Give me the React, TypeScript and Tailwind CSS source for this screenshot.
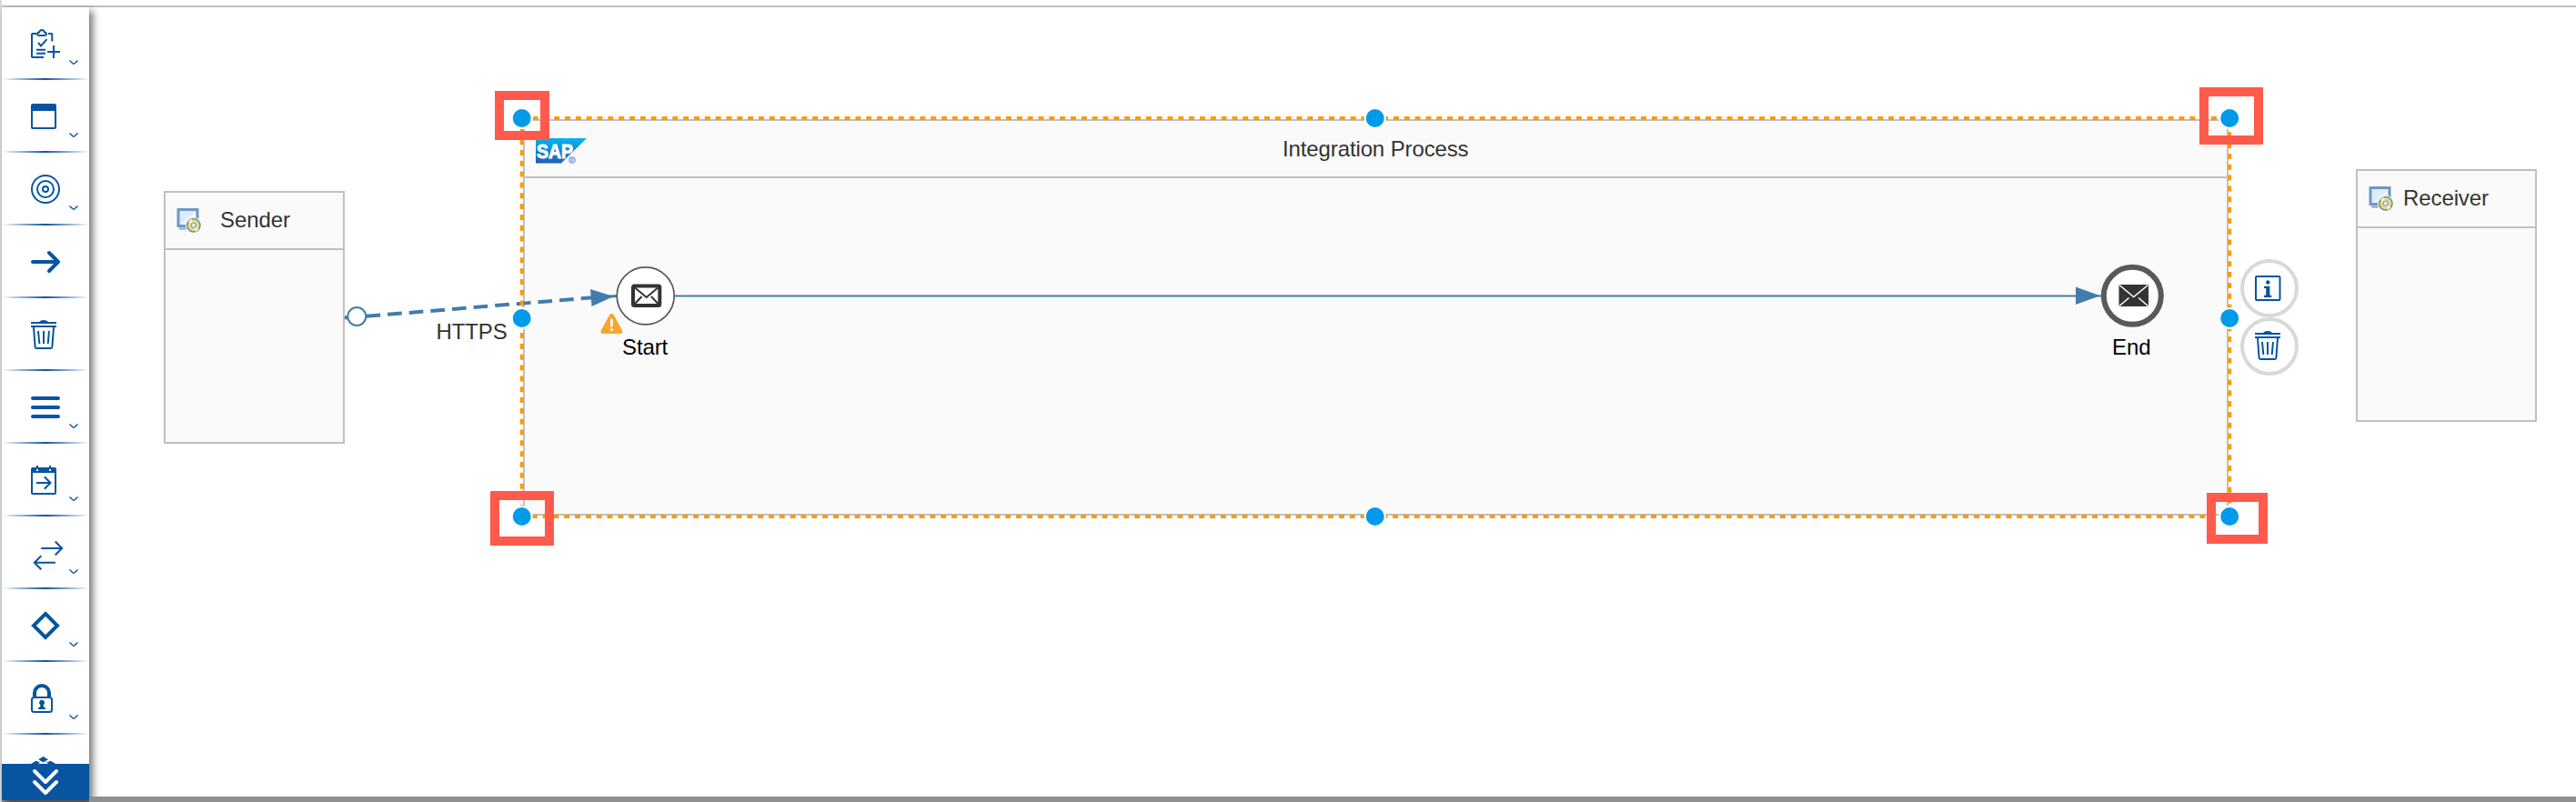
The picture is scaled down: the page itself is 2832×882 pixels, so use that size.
import type { ReactNode } from "react";

const BLUE = "#0854a0";
const WIRE = "#427cac";

function Glyph({ children, className = "" }: { children: ReactNode; className?: string }) {
  return (
    <svg
      width="32"
      height="32"
      viewBox="0 0 32 32"
      fill="none"
      stroke={BLUE}
      strokeWidth="2"
      className={`overflow-visible shrink-0 ${className}`}
    >
      {children}
    </svg>
  );
}

const TrashGlyph = () => (
  <Glyph>
    <path d="M9 2.2C10 .8 11.500 0 14 0s4 .8 5 2.200z" fill={BLUE} stroke="none" />
    <path d="M0 3h28M0 7h28" />
    <path d="M3 8l1.600 21.500q.1 1.500 1.500 1.500h15.800q1.400 0 1.500-1.500L25 8" />
    <path d="M8 12l1.300 14M14 12v14M20 12l-1.300 14" />
  </Glyph>
);

const InfoGlyph = () => (
  <Glyph>
    <rect x="1" y="4" width="26.500" height="26" rx="1" />
    <circle cx="14.300" cy="10.500" r="2.200" fill={BLUE} stroke="none" />
    <path d="M10 14.700h6.400v10h1.900v2.200H10v-2.200h2.200v-7.600H10z" fill={BLUE} stroke="none" />
  </Glyph>
);

const tools: { name: string; more: boolean; icon: ReactNode }[] = [
  {
    name: "tasks",
    more: true,
    icon: (
      <Glyph>
        <path d="M19 5h3.500q.8 0 .8.800V13.500M6 5H1.800q-.8 0-.8.800V30.200q0 .8.800.8H14" />
        <path d="M7 5.800q0-2 2-2.300Q10 1 12 1t3 2.500q2 .3 2 2.300Q16.500 7 15 7H9Q7.500 7 7 5.800z" />
        <path d="M8 15l3 3.400 6.500-7.200M6 22.800h10M6 26.800h10M25 18v14M18 25h14" />
      </Glyph>
    ),
  },
  {
    name: "participant",
    more: true,
    icon: (
      <Glyph>
        <rect x="1" y="3" width="26" height="26" rx="1" />
        <path d="M1 3h26v7H1z" fill={BLUE} stroke="none" />
      </Glyph>
    ),
  },
  {
    name: "events",
    more: true,
    icon: (
      <Glyph>
        <circle cx="16" cy="16" r="15" />
        <circle cx="16" cy="16" r="9" />
        <circle cx="16" cy="16" r="3" />
      </Glyph>
    ),
  },
  {
    name: "connector",
    more: false,
    icon: (
      <Glyph>
        <path d="M2 16h28M20 6l10 10-10 10" strokeWidth="4" strokeLinecap="round" strokeLinejoin="round" />
      </Glyph>
    ),
  },
  { name: "delete", more: false, icon: <TrashGlyph /> },
  {
    name: "mapping",
    more: true,
    icon: (
      <Glyph>
        <path d="M2 6h28M2 16h28M2 26h28" strokeWidth="4" strokeLinecap="round" />
      </Glyph>
    ),
  },
  {
    name: "schedule",
    more: true,
    icon: (
      <Glyph>
        <rect x="1" y="3" width="26" height="28" rx="1" />
        <path d="M1 2.500h26V8H1z" fill={BLUE} stroke="none" />
        <path d="M7 0v4M21 0v4" />
        <path d="M6 5h2M20 5h2" stroke="#fff" />
        <path d="M6 19h15.500M14.800 12.300l6.700 6.700-6.700 6.700" />
      </Glyph>
    ),
  },
  {
    name: "call",
    more: true,
    icon: (
      <Glyph>
        <path d="M11.300 11h23M26.700 3.500L34.200 11l-7.500 7.500M27 26.700H4M11.300 19.200l-7.500 7.500 7.500 7.500" />
      </Glyph>
    ),
  },
  {
    name: "routing",
    more: true,
    icon: (
      <Glyph>
        <path d="M16 3l13 13-13 13L3 16z" strokeWidth="4" />
      </Glyph>
    ),
  },
  {
    name: "security",
    more: true,
    icon: (
      <Glyph>
        <path d="M4 14.500V10a8 8 0 0 1 16 0v4.500" strokeWidth="4" />
        <rect x="1" y="15" width="22" height="16" rx="2.500" />
        <path d="M12 17.800a3 3 0 0 1 1.700 5.500l.4 2.200 2 1v1.500H8v-1.500l2-1 .4-2.200A3 3 0 0 1 12 17.800z" fill={BLUE} stroke="none" />
      </Glyph>
    ),
  },
];

function Tool({ icon, more }: { icon: ReactNode; more: boolean }) {
  return (
    <button className="relative flex h-20 w-24 shrink-0 items-start pt-6 pl-8">
      {icon}
      {more && (
        <svg width="12" height="8" viewBox="0 0 12 8" fill="none" className="absolute top-[57px] left-[73px]">
          <path d="M1.500 1.500L5 4.800q1 .8 2 0L10.500 1.500" stroke={BLUE} strokeWidth="1.400" />
        </svg>
      )}
      <span className="absolute bottom-0 left-0 h-0.5 w-24 bg-linear-to-r from-white via-[#0854a0] to-white" />
    </button>
  );
}

function Toolbar() {
  return (
    <nav className="relative z-10 flex h-[872px] w-24 flex-col bg-white shadow-[4px_4px_8px_rgba(0,0,0,0.55)]">
      <div className="flex h-[832px] flex-col overflow-hidden">
        {tools.map((t) => (
          <Tool key={t.name} icon={t.icon} more={t.more} />
        ))}
        <div className="h-8 shrink-0 pt-6 pl-8">
          <Glyph>
            <path d="M13.600 0q.8.300 5.400 3.200-4.600 2.900-5.400 3.100-.8-.2-5.400-3.100Q12.800.3 13.600 0zM0 8l5.500-3.300L10 6.500 8 8zM27.200 8l-5.500-3.300-4.500 1.800L19.200 8z" fill={BLUE} stroke="none" />
          </Glyph>
        </div>
      </div>
      <button className="flex h-10 items-center justify-center bg-[#0854a0]">
        <svg width="32" height="32" viewBox="0 0 32 32" fill="none" stroke="#fff" strokeWidth="4" strokeLinecap="round" strokeLinejoin="round">
          <path d="M4 4l12 12L28 4M4 16l12 12 12-12" />
        </svg>
      </button>
    </nav>
  );
}

function SystemIcon() {
  return (
    <svg width="28" height="28" viewBox="0 0 28 28" className="shrink-0">
      <rect x="2" y="1.500" width="21" height="18" fill="#dcebf8" stroke="#6f96c6" strokeWidth="3" />
      <path d="M4 18L21 4v14z" fill="#f1f7fc" />
      <path d="M3 22.500h8" stroke="#86a3c6" strokeWidth="2" />
      <circle cx="18.800" cy="18.800" r="9" fill="#fafafa" />
      <circle cx="18.800" cy="18.800" r="7.200" fill="#e3e07c" stroke="#7389a0" strokeWidth="1.500" />
      <path d="M18.800 18.800L13 14.500l3.500-3zM18.800 18.800l5.800 4.300-3.500 3z" fill="#f6f6d8" />
      <circle cx="18.800" cy="18.800" r="2.600" fill="#e9eff6" stroke="#8ea6c4" strokeWidth="1.300" />
    </svg>
  );
}

function Participant({ name, place, labelGap }: { name: string; place: string; labelGap: string }) {
  return (
    <section className={`absolute flex h-[278px] w-[199px] flex-col border-2 border-[#c0c0c0] bg-[#fafafa] ${place}`}>
      <header className="flex h-[63px] shrink-0 items-center border-b-2 border-[#c0c0c0] pl-3">
        <SystemIcon />
        <span className={`-mt-0.5 text-2xl tracking-[-0.1px] text-[#333] ${labelGap}`}>{name}</span>
      </header>
    </section>
  );
}

const handles: [number, number][] = [
  [573.7, 130], [1511.700, 130], [2451.200, 130],
  [573.7, 350], [2451.200, 350],
  [573.7, 568], [1511.700, 568], [2451.200, 568],
];

function Wires() {
  return (
    <svg width="2832" height="882" viewBox="0 0 2832 882" fill="none" className="absolute top-0 left-0">
      <path d="M379 349.300h4" stroke={WIRE} strokeWidth="4" />
      <path d="M402.500 347.800L651 327.300" stroke={WIRE} strokeWidth="4" strokeDasharray="15.700 8" />
      <path d="M668 326.300l10-.8" stroke={WIRE} strokeWidth="3" />
      <path d="M649 318l25.500 8-24 11z" fill={WIRE} />
      <circle cx="392.300" cy="348" r="10" fill="#fff" stroke={WIRE} strokeWidth="2" />

      <path d="M742 325.500H2284" stroke={WIRE} strokeWidth="2" />
      <path d="M2282 315.500l27 9.800-27 9.700z" fill={WIRE} />
      <path d="M2300 325.500h10" stroke={WIRE} strokeWidth="2" />

      <circle cx="709.700" cy="325.300" r="31.500" fill="#fff" stroke="#585858" strokeWidth="1.700" />
      <rect x="696" y="314.500" width="29.300" height="21.500" rx="1.500" stroke="#333" strokeWidth="4" />
      <path d="M697 315.500l13.700 11.500 13.700-11.500M697 335l8.500-9M724.400 335l-8.500-9" stroke="#333" strokeWidth="2" />

      <circle cx="2344.300" cy="325.300" r="31.500" fill="#fff" stroke="#595959" strokeWidth="6" />
      <path d="M2329.500 313h32.500v24h-32.500z" fill="#333" />
      <path d="M2330 313.500l15.700 13 15.700-13M2330 336.500l10.500-9M2361.500 336.500l-10.500-9" stroke="#fff" strokeWidth="1.600" />

      <path d="M670 346.500q2.400-3.500 4.800 0l9.100 16.500q1.500 4-2.400 4h-18.200q-3.900 0-2.400-4z" fill="#faa52d" />
      <path d="M672.400 352v6.500" stroke="#fff" strokeWidth="2.800" strokeLinecap="round" />
      <circle cx="672.400" cy="362.600" r="1.500" fill="#fff" />

      <rect x="573.700" y="130" width="1877.500" height="438" stroke="#ff9a00" strokeWidth="4" strokeDasharray="6 5.830" />
      {handles.map(([x, y]) => (
        <circle key={`${x}-${y}`} cx={x} cy={y} r="11" fill="#009aeb" stroke="#fff" strokeWidth="2" />
      ))}
    </svg>
  );
}

function SapLogo() {
  return (
    <svg width="57" height="28" viewBox="0 0 57 28" className="ml-3">
      <defs>
        <linearGradient id="sap" x1="0" y1="0" x2="0" y2="1">
          <stop offset="0" stopColor="#05b5ee" />
          <stop offset="1" stopColor="#1d5fbb" />
        </linearGradient>
      </defs>
      <path d="M0 0h56L28 27.500H0z" fill="url(#sap)" />
      <text x="1" y="22" fill="#fff" stroke="#fff" strokeWidth="0.900" fontFamily="Liberation Sans" fontWeight="700" fontSize="22" textLength="40" lengthAdjust="spacingAndGlyphs">
        SAP
      </text>
      <circle cx="40" cy="24" r="3.200" fill="#dfe6f5" stroke="#7d9bd6" strokeWidth="1.200" />
      <path d="M39 26v-3.600h1.600q.8.900 0 1.800H39.500l1.500 1.700" stroke="#7d9bd6" strokeWidth="0.800" fill="none" />
    </svg>
  );
}

function ActionButton({ children }: { children: ReactNode }) {
  return (
    <button className="flex size-16 items-start rounded-full border-4 border-[#d9d9d9] bg-white pt-[11px] pl-3">
      {children}
    </button>
  );
}

export default function App() {
  return (
    <div className="relative flex h-[882px] w-[2832px] flex-col overflow-hidden bg-white font-['Liberation_Sans',Arial,sans-serif]">
      <div className="ml-0.5 h-2 shrink-0 border-b-2 border-[#bfbfbf]" />
      <div className="flex h-[874px]">
        <div className="-mt-2 h-[882px] w-0.5 bg-[#d9d9d9]" />
        <div className="flex flex-col bg-[#8f8f8f]">
          <Toolbar />
        </div>
        <main className="flex flex-1 flex-col justify-end">
          <div className="z-10 h-1.5 bg-[#8f8f8f]" />
        </main>
      </div>

      <Participant name="Sender" place="top-[210px] left-[180px]" labelGap="ml-5" />
      <Participant name="Receiver" place="top-[186px] left-[2590px]" labelGap="ml-[10px]" />

      <section className="absolute top-[131px] left-[574.5px] flex h-[436px] w-[1875.5px] flex-col border-2 border-[#c0c0c0] bg-[#fafafa]">
        <header className="relative flex h-[63px] shrink-0 items-center border-b-2 border-[#c0c0c0] text-2xl text-[#333]">
          <div className="mt-[5px]">
            <SapLogo />
          </div>
          <span className="absolute inset-x-0 text-center tracking-[-0.12px]">Integration Process</span>
        </header>
      </section>

      <Wires />

      <span className="absolute top-[349px] left-[479.5px] text-2xl tracking-[-0.1px] text-[#333]">HTTPS</span>
      <span className="absolute top-[366px] left-[684px] text-2xl tracking-[-0.1px] text-black">Start</span>
      <span className="absolute top-[366px] left-[2322px] text-2xl tracking-[-0.1px] text-black">End</span>

      <div className="absolute top-[285px] left-[2463px] flex flex-col">
        <ActionButton>
          <InfoGlyph />
        </ActionButton>
        <ActionButton>
          <TrashGlyph />
        </ActionButton>
      </div>

      <div className="absolute top-[100px] left-[544px] h-[54px] w-[60px] border-10 border-[#ff5a4c]" />
      <div className="absolute top-[96px] left-[2418px] h-[63px] w-[70px] border-10 border-[#ff5a4c]" />
      <div className="absolute top-[540px] left-[539px] h-[60px] w-[70px] border-10 border-[#ff5a4c]" />
      <div className="absolute top-[542px] left-[2426px] h-[56px] w-[67px] border-10 border-[#ff5a4c]" />
    </div>
  );
}
